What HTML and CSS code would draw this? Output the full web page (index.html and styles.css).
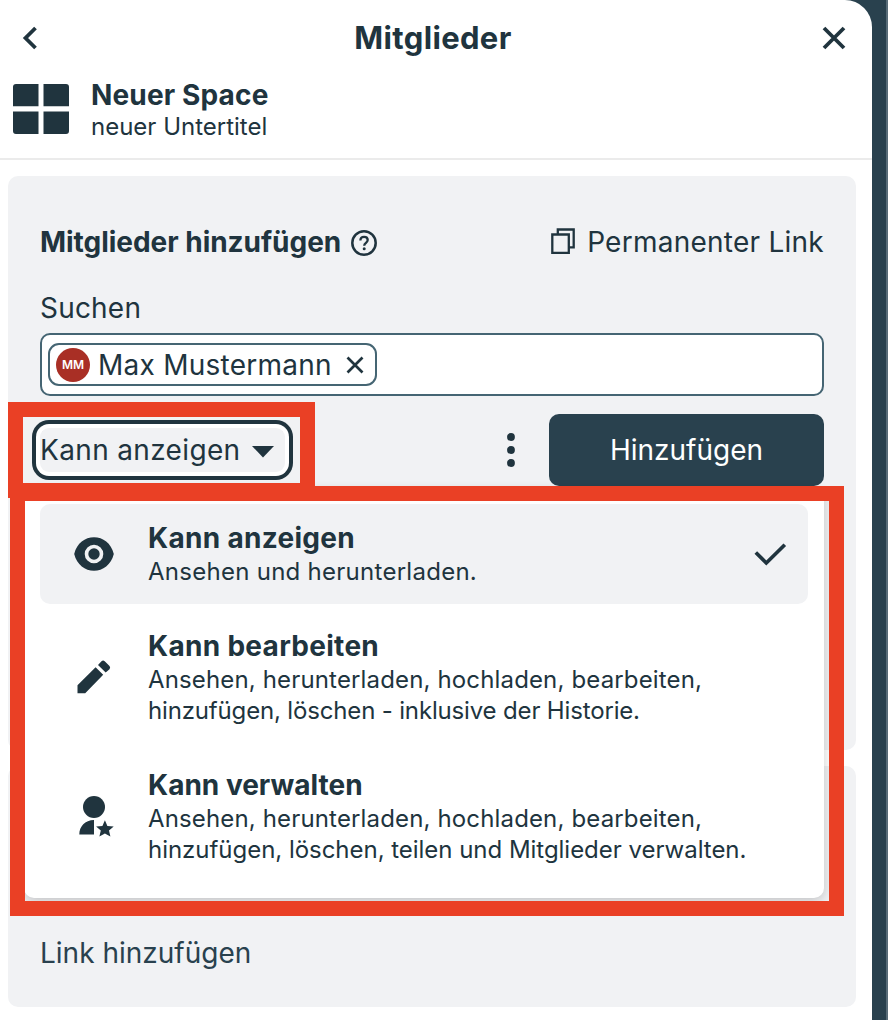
FILE: index.html
```
<!DOCTYPE html>
<html lang="de">
<head>
<meta charset="utf-8">
<title>Mitglieder</title>
<link rel="stylesheet" href="styles.css">
</head>
<body>
<div class="stage">
  <aside class="sidebar">
    <header class="topbar">
      <svg class="icon-back" width="16" height="24" viewBox="0 0 16 24"><path d="M13.500 2 3.500 12l10 10" fill="none" stroke="currentColor" stroke-width="3.800"/></svg>
      <h1 class="title">Mitglieder</h1>
      <svg class="icon-close" width="24" height="24" viewBox="0 0 24 24"><path d="M2 2l20 20M22 2 2 22" fill="none" stroke="currentColor" stroke-width="3.800"/></svg>
    </header>
    <section class="space">
      <svg width="56" height="50" viewBox="0 0 56 50" fill="currentColor"><path d="M3 0h22.500v22.300H0V3a3 3 0 0 1 3-3zM30.500 0H53a3 3 0 0 1 3 3v19.300H30.500zM0 27.500h25.500V50H3a3 3 0 0 1-3-3zM30.500 27.500H56V47a3 3 0 0 1-3 3H30.500z"/></svg>
      <div class="space-text">
        <div class="space-name">Neuer Space</div>
        <div class="space-sub">neuer Untertitel</div>
      </div>
    </section>
    <main class="cards">
      <section class="card card-members">
        <div class="card-head">
          <h2 class="card-title">Mitglieder hinzufügen</h2>
          <svg class="icon-help" width="26" height="26" viewBox="0 0 26 26"><circle cx="13" cy="13" r="11.700" fill="none" stroke="currentColor" stroke-width="2.500"/><path d="M9.400 10.400c0-2.300 1.600-3.600 3.700-3.600s3.600 1.300 3.600 3.200c0 2.700-3.500 2.900-3.500 5.700" fill="none" stroke="currentColor" stroke-width="2.300"/><circle cx="13.200" cy="18.700" r="1.500" fill="currentColor"/></svg>
          <a class="permalink">
            <svg width="24" height="27" viewBox="0 0 24 27" fill="none" stroke="currentColor" stroke-width="2.300"><path d="M1.300 6.500h16.500v18.300H1.300zM6.800 6.500V1.500h15.900v17.800h-4.900"/></svg>
            <span class="permalink-text">Permanenter Link</span>
          </a>
        </div>
        <label class="search-label">Suchen</label>
        <div class="search">
          <div class="chip">
            <span class="avatar">MM</span>
            <span class="chip-name">Max Mustermann</span>
            <svg width="18" height="18" viewBox="0 0 18 18"><path d="M1.500 1.500l15 15M16.500 1.500l-15 15" fill="none" stroke="currentColor" stroke-width="2.700"/></svg>
          </div>
        </div>
        <div class="actions">
          <button class="role"><span class="role-text">Kann anzeigen</span><svg class="caret" width="22" height="12" viewBox="0 0 22 12"><path d="M0 0h22L11 11.500z" fill="currentColor"/></svg></button>
          <svg class="icon-more" width="8" height="34" viewBox="0 0 8 34" fill="currentColor"><circle cx="4" cy="4" r="3.900"/><circle cx="4" cy="17" r="3.900"/><circle cx="4" cy="30" r="3.900"/></svg>
          <button class="submit"><span class="submit-text">Hinzufügen</span></button>
        </div>
      </section>
      <section class="card card-links"><a class="add-link">Link hinzufügen</a></section>
    </main>
  </aside>

  <div class="menu">
    <div class="option selected">
      <svg class="option-icon" width="40" height="34" viewBox="0 0 40 34"><path fill="currentColor" fill-rule="evenodd" d="M20 .3C11 .3 3 6 .2 17 3 28 11 33.700 20 33.700S37 28 39.800 17C37 6 29 .3 20 .3zM20 7.700a9.300 9.300 0 1 1 0 18.600 9.300 9.300 0 0 1 0-18.600z"/><circle cx="20" cy="17" r="5.700" fill="currentColor"/></svg>
      <div class="option-text">
        <div class="option-title">Kann anzeigen</div>
        <div class="option-desc desc-view">Ansehen und herunterladen.</div>
      </div>
      <svg class="icon-check" width="32" height="23" viewBox="0 0 32 23"><path d="M1.800 9.500 12.300 20 30.800 1.800" fill="none" stroke="currentColor" stroke-width="3.700"/></svg>
    </div>
    <div class="option">
      <svg class="option-icon" width="40" height="36" viewBox="0 0 40 36" fill="currentColor"><path d="M3.500 25.300 21.600 7.200l7.600 7.600L11.200 33.300H3.500zM24 4.900 27.500 1.300q1.600-1.400 3.200 0l4.800 4.800q1.300 1.600 0 3.200L31.700 12.500z"/></svg>
      <div class="option-text">
        <div class="option-title">Kann bearbeiten</div>
        <div class="option-desc"><span class="line-first">Ansehen, herunterladen, hochladen, bearbeiten,</span><br><span class="line-edit">hinzufügen, löschen - inklusive der Historie.</span></div>
      </div>
    </div>
    <div class="option">
      <svg class="option-icon" width="40" height="42" viewBox="0 0 40 42" fill="currentColor"><circle cx="20" cy="11" r="11"/><path d="M20 24v14.500H5.300C5.300 30.500 11 24 20 24zM30.900 24.300l2.500 5.600 6.300.6-4.700 4.100 1.400 6-5.500-3.200-5.500 3.200 1.400-6-4.700-4.100 6.300-.6z"/></svg>
      <div class="option-text">
        <div class="option-title title-manage">Kann verwalten</div>
        <div class="option-desc"><span class="line-first">Ansehen, herunterladen, hochladen, bearbeiten,</span><br><span class="line-manage">hinzufügen, löschen, teilen und Mitglieder verwalten.</span></div>
      </div>
    </div>
  </div>
  <div class="mark mark-role"></div>
  <div class="mark mark-menu"></div>
</div>
</body>
</html>
```
FILE: styles.css
```
* { box-sizing: border-box; }
body {
  margin: 0;
  font-family: Inter, "Noto Sans", sans-serif;
  color: #20343e;
  background: #29414e;
}
svg { display: block; flex: none; overflow: visible; }
h1, h2 { margin: 0; }
button { font: inherit; color: inherit; border: 0; padding: 0; }
.stage {
  position: relative;
  width: 888px;
  height: 1020px;
  overflow: hidden;
  border-right: 2px solid #586c78;
  white-space: nowrap;
}
.sidebar {
  width: 872px;
  height: 1020px;
  background: #fff;
  border-top-right-radius: 27px;
}
.topbar {
  display: flex;
  align-items: center;
  height: 76px;
  padding: 0 26px 0 22px;
}
.title {
  flex: 1;
  text-align: center;
  font-size: 31px;
  font-weight: 700;
  line-height: 40px;
  letter-spacing: .35px;
  padding-left: 6px;
}
.space {
  display: flex;
  gap: 22px;
  height: 84px;
  padding: 8px 0 0 13px;
  border-bottom: 2px solid #ebebeb;
}
.space-text { margin-top: -5px; }
.space-name { font-size: 28px; font-weight: 700; line-height: 32px; letter-spacing: .15px; }
.space-sub { font-size: 24px; line-height: 31px; }
.cards {
  display: flex;
  flex-direction: column;
  gap: 16px;
  padding: 16px 16px 0 8px;
}
.card { background: #f1f2f4; border-radius: 10px; padding: 0 32px; }
.card-members { height: 574px; padding-top: 46px; }
.card-links { height: 241px; padding-top: 167px; }
.card-head { display: flex; align-items: center; height: 40px; }
.card-title { font-size: 28px; font-weight: 700; letter-spacing: -.03px; }
.icon-help { margin: 2px 0 0 10px; }
.permalink { display: flex; align-items: center; gap: 12px; margin-left: auto; font-size: 28px; }
.permalink svg { margin-top: -2px; }
.permalink-text { letter-spacing: .25px; }
.search-label {
  display: block;
  margin-top: 26px;
  height: 45px;
  line-height: 40px;
  font-size: 28px;
  letter-spacing: .2px;
}
.search {
  height: 63px;
  padding: 8px 6px;
  background: #fff;
  border: 2px solid #456573;
  border-radius: 10px;
}
.chip {
  display: flex;
  align-items: center;
  width: 329px;
  height: 43px;
  padding-left: 6px;
  border: 2px solid #456573;
  border-radius: 11px;
  font-size: 28px;
}
.avatar {
  width: 34px;
  height: 34px;
  border-radius: 50%;
  background: #a92f25;
  color: #fff;
  font-size: 12px;
  font-weight: 600;
  line-height: 33px;
  text-align: center;
}
.chip-name { width: 256px; padding-left: 8px; letter-spacing: .25px; }
.actions { display: flex; align-items: center; height: 72px; margin-top: 18px; }
.role {
  display: flex;
  align-items: center;
  width: 245px;
  height: 44px;
  background: #f1f2f4;
  border-radius: 9px;
  box-shadow: 0 0 0 4px #fff, 0 0 0 8px #20343e;
  font-size: 28px;
}
.role-text { width: 212px; text-align: left; letter-spacing: .35px; }
.caret { margin-top: 3px; }
.icon-more { margin-left: 222px; }
.submit {
  width: 275px;
  height: 72px;
  margin-left: auto;
  border-radius: 10px;
  background: #29414e;
  color: #fff;
  font-size: 28px;
}
.add-link { display: block; font-size: 28px; line-height: 40px; color: #29414e; }
.menu {
  position: absolute;
  left: 24px;
  top: 488px;
  width: 800px;
  height: 410px;
  padding: 16px;
  display: flex;
  flex-direction: column;
  gap: 8px;
  background: #fff;
  border-radius: 10px;
  box-shadow: 0 3px 12px rgba(0, 0, 0, .2);
}
.option {
  display: flex;
  align-items: center;
  height: 131px;
  padding: 0 22px 0 34px;
  border-radius: 10px;
}
.option.selected { height: 100px; background: #f1f2f4; }
.option-text { margin: -1px 0 0 34px; }
.option-title { font-size: 28px; font-weight: 700; line-height: 36px; letter-spacing: .3px; }
.title-manage { letter-spacing: 0; }
.option-desc { font-size: 24px; line-height: 31px; }
.desc-view { letter-spacing: .27px; }
.line-first { letter-spacing: .15px; }
.line-edit { letter-spacing: -.16px; }
.line-manage { letter-spacing: -.03px; }
.icon-check { margin-left: auto; }
.mark { position: absolute; border: 15px solid #ea4025; }
.mark-role { left: 8px; top: 402px; width: 307px; height: 96px; }
.mark-menu { left: 10px; top: 486px; width: 834px; height: 430px; }
```
